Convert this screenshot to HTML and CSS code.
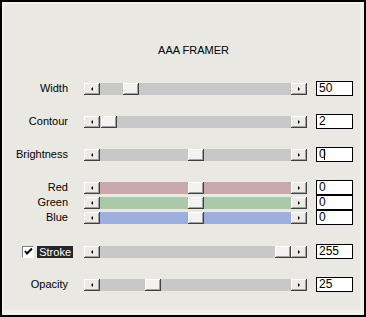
FILE: index.html
```html
<!DOCTYPE html>
<html lang="en">
<head>
  <meta charset="UTF-8" />
  <title>AAA Framer</title>
  <link rel="stylesheet" href="styles.css">
</head>
<body>

<div class="dialog">
  <div class="panel">
    <h1 class="title">AAA FRAMER</h1>

    <div class="row row-first">
      <span class="label">Width</span>
      <div class="slider">
        <span class="btn btn-left"></span>
        <div class="track"><span class="thumb" style="left: 23px"></span></div>
        <span class="btn btn-right"></span>
      </div>
      <div class="field">50</div>
    </div>

    <div class="row">
      <span class="label">Contour</span>
      <div class="slider">
        <span class="btn btn-left"></span>
        <div class="track"><span class="thumb" style="left: 1px"></span></div>
        <span class="btn btn-right"></span>
      </div>
      <div class="field">2</div>
    </div>

    <div class="row">
      <span class="label">Brightness</span>
      <div class="slider">
        <span class="btn btn-left"></span>
        <div class="track"><span class="thumb" style="left: 88px"></span></div>
        <span class="btn btn-right"></span>
      </div>
      <div class="field">0<span class="caret"></span></div>
    </div>

    <div class="row">
      <span class="label">Red</span>
      <div class="slider">
        <span class="btn btn-left"></span>
        <div class="track track-red"><span class="thumb" style="left: 88px"></span></div>
        <span class="btn btn-right"></span>
      </div>
      <div class="field">0</div>
    </div>

    <div class="row row-tight">
      <span class="label">Green</span>
      <div class="slider">
        <span class="btn btn-left"></span>
        <div class="track track-green"><span class="thumb" style="left: 88px"></span></div>
        <span class="btn btn-right"></span>
      </div>
      <div class="field">0</div>
    </div>

    <div class="row row-tight">
      <span class="label">Blue</span>
      <div class="slider">
        <span class="btn btn-left"></span>
        <div class="track track-blue"><span class="thumb" style="left: 88px"></span></div>
        <span class="btn btn-right"></span>
      </div>
      <div class="field">0</div>
    </div>

    <div class="row row-stroke">
      <span class="label label-check">
        <span class="checkbox">
          <svg width="9" height="9" viewBox="0 0 9 9"><polyline points="1,4 3,6.5 8,1.5" fill="none" stroke="#000" stroke-width="2"/></svg>
        </span>
        <span class="selected">Stroke</span>
      </span>
      <div class="slider">
        <span class="btn btn-left"></span>
        <div class="track"><span class="thumb" style="left: 175px"></span></div>
        <span class="btn btn-right"></span>
      </div>
      <div class="field">255</div>
    </div>

    <div class="row">
      <span class="label">Opacity</span>
      <div class="slider">
        <span class="btn btn-left"></span>
        <div class="track"><span class="thumb" style="left: 45px"></span></div>
        <span class="btn btn-right"></span>
      </div>
      <div class="field">25</div>
    </div>
  </div>
</div>

</body>
</html>
```

FILE: styles.css
```css
body {
  margin: 0;
  font-family: 'Liberation Sans', Arial, sans-serif;
  font-size: 11px;
  color: #000;
  background: #fff;
}
.dialog {
  width: 366px;
  height: 317px;
  box-sizing: border-box;
  border: 2px solid #000;
  background: #f2f1ec;
  padding: 2px 0 0 2px;
}
.panel {
  width: 356px;
  height: 306px;
  background: #e9e8e2;
  padding-top: 39px;
  box-sizing: border-box;
}
.title {
  margin: 0;
  font-size: 11px;
  font-weight: normal;
  line-height: 14px;
  text-align: center;
  padding-left: 23px;
}
.row {
  display: flex;
  align-items: center;
  height: 15px;
  margin-top: 18px;
}
.row-first {
  margin-top: 24px;
}
.row-tight {
  margin-top: 0;
}
.row-stroke {
  margin-top: 19px;
}
.label {
  width: 64px;
  text-align: right;
  line-height: 15px;
}
.label-check {
  width: 69px;
  display: flex;
  justify-content: flex-end;
  align-items: center;
  gap: 3px;
}
.checkbox {
  width: 12px;
  height: 12px;
  box-sizing: border-box;
  background: #fff;
  border-top: 1px solid #808080;
  border-left: 1px solid #808080;
  border-right: 1px solid #fff;
  border-bottom: 1px solid #fff;
  display: flex;
  align-items: center;
  justify-content: center;
}
.checkbox svg {
  display: block;
}
.selected {
  background: #262626;
  color: #fff;
  padding: 0 2px;
  line-height: 12px;
}
.slider {
  display: flex;
  width: 223px;
  height: 12px;
  margin-left: 16px;
}
.row-stroke .slider {
  margin-left: 11px;
}
.btn,
.thumb {
  width: 16px;
  height: 12px;
  box-sizing: border-box;
  background: #ecebe6;
  box-shadow: inset -1px -1px #404040, inset 1px 1px #fff, inset -2px -2px #a0a0a0;
}
.btn {
  display: flex;
  align-items: center;
  justify-content: center;
  flex-shrink: 0;
}
.btn::after {
  content: '';
  width: 0;
  height: 0;
  border-top: 2px solid transparent;
  border-bottom: 2px solid transparent;
}
.btn-left::after {
  border-right: 2px solid #000;
}
.btn-right::after {
  border-left: 2px solid #000;
}
.track {
  flex: 1;
  position: relative;
  background: #c8c8c8;
}
.track-red {
  background: #c9a9aa;
}
.track-green {
  background: #a9caa9;
}
.track-blue {
  background: #9cafdf;
}
.thumb {
  position: absolute;
  top: 0;
  background: #f3f2ee;
}
.field {
  width: 37px;
  height: 15px;
  box-sizing: border-box;
  margin-left: 9px;
  border: 1px solid #000;
  background: #fff;
  font-size: 12px;
  line-height: 13px;
  padding-left: 2px;
  display: flex;
  align-items: center;
}
.caret {
  width: 1px;
  height: 11px;
  background: #000;
  margin-left: -2px;
}
```
